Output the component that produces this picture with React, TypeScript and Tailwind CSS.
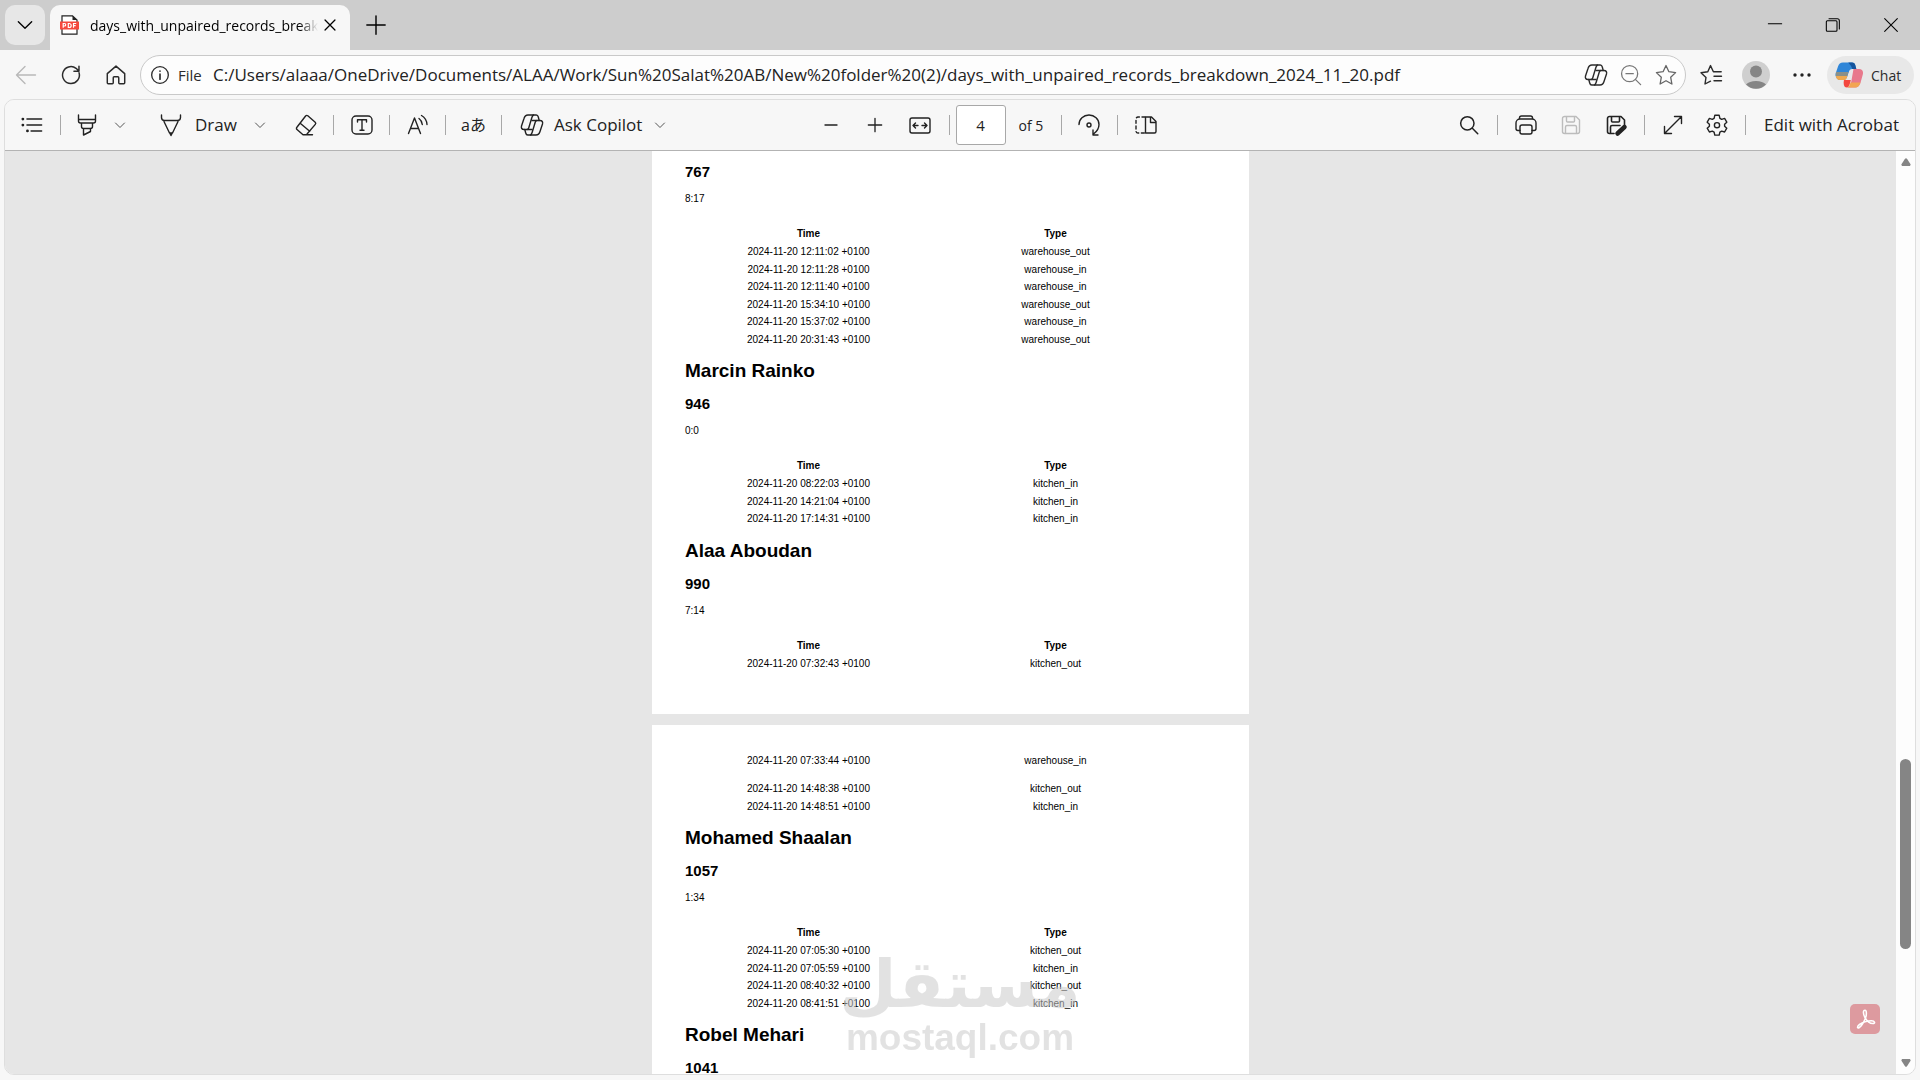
import type { ReactNode } from "react";

type Row = { time: string; type: string };

type Person = {
  name?: string;
  id: string;
  hours?: string;
  rows?: Row[];
};

const firstPage: Person[] = [
  {
    id: "767",
    hours: "8:17",
    rows: [
      { time: "2024-11-20 12:11:02 +0100", type: "warehouse_out" },
      { time: "2024-11-20 12:11:28 +0100", type: "warehouse_in" },
      { time: "2024-11-20 12:11:40 +0100", type: "warehouse_in" },
      { time: "2024-11-20 15:34:10 +0100", type: "warehouse_out" },
      { time: "2024-11-20 15:37:02 +0100", type: "warehouse_in" },
      { time: "2024-11-20 20:31:43 +0100", type: "warehouse_out" },
    ],
  },
  {
    name: "Marcin Rainko",
    id: "946",
    hours: "0:0",
    rows: [
      { time: "2024-11-20 08:22:03 +0100", type: "kitchen_in" },
      { time: "2024-11-20 14:21:04 +0100", type: "kitchen_in" },
      { time: "2024-11-20 17:14:31 +0100", type: "kitchen_in" },
    ],
  },
  {
    name: "Alaa Aboudan",
    id: "990",
    hours: "7:14",
    rows: [{ time: "2024-11-20 07:32:43 +0100", type: "kitchen_out" }],
  },
];

const carriedRows: Row[] = [
  { time: "2024-11-20 14:48:38 +0100", type: "kitchen_out" },
  { time: "2024-11-20 14:48:51 +0100", type: "kitchen_in" },
];

const secondPage: Person[] = [
  {
    name: "Mohamed Shaalan",
    id: "1057",
    hours: "1:34",
    rows: [
      { time: "2024-11-20 07:05:30 +0100", type: "kitchen_out" },
      { time: "2024-11-20 07:05:59 +0100", type: "kitchen_in" },
      { time: "2024-11-20 08:40:32 +0100", type: "kitchen_out" },
      { time: "2024-11-20 08:41:51 +0100", type: "kitchen_in" },
    ],
  },
  { name: "Robel Mehari", id: "1041" },
];

const Icon = ({
  children,
  className = "size-6",
  stroke = 1.4,
}: {
  children: ReactNode;
  className?: string;
  stroke?: number;
}) => (
  <svg
    viewBox="0 0 24 24"
    className={`shrink-0 ${className}`}
    fill="none"
    stroke="currentColor"
    strokeWidth={stroke}
    strokeLinecap="round"
    strokeLinejoin="round"
    aria-hidden="true"
  >
    {children}
  </svg>
);

const IconButton = ({
  label,
  className = "w-[44px]",
  children,
}: {
  label: string;
  className?: string;
  children: ReactNode;
}) => (
  <button
    type="button"
    aria-label={label}
    className={`flex h-10 shrink-0 items-center justify-center ${className}`}
  >
    {children}
  </button>
);

const Divider = () => (
  <div className="mx-[6px] h-5 w-px shrink-0 bg-[#a8a8a8]"></div>
);

const Chevron = () => (
  <Icon className="size-3 text-[#555]" stroke={2}>
    <path d="M3 8l9 9 9-9" />
  </Icon>
);

const CopilotOutline = () => (
  <Icon stroke={1.4}>
    <path d="M12 16.500H4C1.800 16.500 1 15 1.500 13L4 5.500C4.700 3 6 2 8 2h8.300c1.200 0 1.700.8 2 2l.9 3.500" />
    <path d="M12 7.500h8c2.200 0 3 1.500 2.500 3.500L20 18.500c-.7 2.500-2 3.500-4 3.500H7.700c-1.200 0-1.700-.8-2-2l-.9-3.500" />
    <path d="M13.500 2c-1 .5-1.300 1.500-1.700 2.800L8.700 15c-.3 1-.8 1.500-1.700 1.500M10.500 22c1-.5 1.300-1.500 1.700-2.800L15.300 9c.3-1 .8-1.500 1.700-1.500" />
  </Icon>
);

const TabStrip = () => (
  <header className="flex h-[50px] shrink-0 items-start bg-[#cdcdcd] pl-[5px] pt-[5px]">
    <button
      type="button"
      aria-label="Search tabs"
      className="flex size-10 items-center justify-center rounded-[10px] bg-[#e7e7e7]"
    >
      <Icon className="size-4" stroke={2}>
        <path d="M2 7l10 10L22 7" />
      </Icon>
    </button>
    <div className="ml-[5px] flex h-[45px] w-[300px] items-center rounded-t-[10px] bg-[#f7f7f7] pb-[5px] pl-[10px] pr-2">
      <svg viewBox="0 0 20 20" className="size-5 shrink-0" aria-hidden="true">
        <path d="M2 .8h10.500L17 5v14.200H2z" fill="#fff" stroke="#222" strokeWidth="1.200" />
        <path d="M12.500.8V5H17z" fill="#222" />
        <path d="M0 6.500h19v8H0z" fill="#f5473c" />
        <path
          d="M3.200 12.800V8.500h1.300a1.200 1.200 0 0 1 0 2.500H3.200M8.300 8.500v4h.9a2 2 0 0 0 0-4zM13.500 12.800V8.500h2.700M13.500 10.700h2.200"
          fill="none"
          stroke="#fff"
          strokeWidth="1.200"
        />
      </svg>
      <span className="ml-[10px] w-[229px] overflow-hidden whitespace-nowrap text-[14px] text-black [mask-image:linear-gradient(to_right,#000_92%,transparent)]">
        days_with_unpaired_records_breakdown
      </span>
      <IconButton label="Close tab" className="w-6">
        <Icon className="size-[14px]" stroke={2.2}>
          <path d="M3.500 3.500l17 17M20.500 3.500l-17 17" />
        </Icon>
      </IconButton>
    </div>
    <IconButton label="New tab" className="ml-1 w-[44px]">
      <Icon className="size-5" stroke={1.7}>
        <path d="M12 1v22M1 12h22" />
      </Icon>
    </IconButton>
    <div className="ml-auto flex">
      <IconButton label="Minimize" className="w-[58px]">
        <Icon className="size-4" stroke={1.6}>
          <path d="M2 10h20" />
        </Icon>
      </IconButton>
      <IconButton label="Restore" className="w-[58px]">
        <Icon className="size-4" stroke={1.6}>
          <rect x="2" y="5.500" width="16" height="16" rx="1.500" />
          <path d="M6 2.500h12.500a3 3 0 0 1 3 3V18" />
        </Icon>
      </IconButton>
      <IconButton label="Close" className="w-[58px]">
        <Icon className="size-4" stroke={1.6}>
          <path d="M2.500 2.500l19 19M21.500 2.500l-19 19" />
        </Icon>
      </IconButton>
    </div>
  </header>
);

const AddressRow = () => (
  <div className="flex h-[49px] shrink-0 items-center pl-[3px] pr-[6px] pt-px text-[#2b2b2b]">
    <IconButton label="Back" className="w-[45px] text-[#b9b9b9]">
      <Icon>
        <path d="M21.500 12H2.500M11 3.500L2.500 12l8.500 8.500" />
      </Icon>
    </IconButton>
    <IconButton label="Refresh" className="w-[45px]">
      <Icon className="size-[22px]" stroke={1.6}>
        <path d="M20.800 9.500A9.200 9.200 0 1 1 17.500 4.700l3 2.800M20.700 2.500v5.300h-5.500" />
      </Icon>
    </IconButton>
    <IconButton label="Home" className="w-[45px]">
      <Icon className="size-[22px]" stroke={1.6}>
        <path d="M2.500 10.500L12 2.300l9.500 8.200v10a1 1 0 0 1-1 1h-4.500a1 1 0 0 1-1-1V15a1 1 0 0 0-1-1h-4a1 1 0 0 0-1 1v5.500a1 1 0 0 1-1 1H3.500a1 1 0 0 1-1-1z" />
      </Icon>
    </IconButton>
    <div className="ml-[2px] flex h-10 min-w-0 flex-1 items-center rounded-full border border-[#c9c9c9] bg-[#fdfdfd] pl-[9px]">
      <Icon className="size-5" stroke={1.6}>
        <circle cx="12" cy="12" r="10" />
        <path d="M12 11v6M12 7.300v.2" strokeWidth="2" />
      </Icon>
      <label htmlFor="url" className="ml-2 w-[35px] shrink-0 text-[15px]">
        File
      </label>
      <input
        id="url"
        className="min-w-0 flex-1 bg-transparent text-[17px] text-[#222] outline-none"
        defaultValue="C:/Users/alaaa/OneDrive/Documents/ALAA/Work/Sun%20Salat%20AB/New%20folder%20(2)/days_with_unpaired_records_breakdown_2024_11_20.pdf"
      />
      <IconButton label="Copilot" className="w-[34px]">
        <CopilotOutline />
      </IconButton>
      <IconButton label="Zoom out" className="w-[35px] text-[#777]">
        <Icon className="size-[22px]" stroke={1.4}>
          <circle cx="10.500" cy="10.500" r="8.800" />
          <path d="M17 17l5.500 5.500M6.500 10.500h8" />
        </Icon>
      </IconButton>
      <IconButton label="Add to favorites" className="mr-[1px] w-[36px] text-[#666]">
        <Icon stroke={1.3}>
          <path d="M12 2.500l2.900 6.200 6.700.9-4.900 4.700 1.200 6.700-5.900-3.300L6.100 21l1.200-6.700-4.900-4.700 6.700-.9z" />
        </Icon>
      </IconButton>
    </div>
    <IconButton label="Favorites" className="w-[50px]">
      <Icon stroke={1.4}>
        <path d="M11.500 18.200L6 21l1-6.600L2 9.700l6.800-1L11.500 2.600l2.900 6.100h7.800M15 13.200h7.500M15 17.800h7.500" />
      </Icon>
    </IconButton>
    <IconButton label="Profile" className="w-10">
      <svg viewBox="0 0 28 28" className="size-7" aria-hidden="true">
        <circle cx="14" cy="14" r="14" fill="#cfcfcf" />
        <circle cx="14" cy="10.500" r="6" fill="#858585" />
        <path d="M4 23.500a11.500 7 0 0 1 20 0 14 14 0 0 1-20 0z" fill="#858585" />
      </svg>
    </IconButton>
    <IconButton label="Settings and more" className="w-[51px]">
      <svg viewBox="0 0 18 4" className="h-1 w-[18px]" fill="#222" aria-hidden="true">
        <circle cx="2" cy="2" r="1.700" />
        <circle cx="9" cy="2" r="1.700" />
        <circle cx="16" cy="2" r="1.700" />
      </svg>
    </IconButton>
    <button
      type="button"
      className="flex h-[38px] w-[87px] shrink-0 items-center rounded-full bg-[#e8e8e8] pl-2 text-[14px]"
    >
      <svg viewBox="0 0 28 28" className="size-7" aria-hidden="true">
        <path d="M8 1.500h9c2 0 2.800 1 3.300 2.800l1 3.700h-4c-2 0-2.900 1-3.500 3L12 16H2c-1.700 0-1.700-2-1.200-4L3 5.500C3.900 2.800 5.300 1.500 8 1.500z" fill="#2f86d8" />
        <path d="M17 1.500c2 0 2.800 1 3.300 2.800l1 3.700h-4c-1-3-2-4-4-6.500z" fill="#16549c" />
        <path d="M1 11h12.500L12 16c-.6 2-1.500 3-3.500 3H5C2.500 19 0 17 1 11z" fill="#8a9089" />
        <path d="M1 15h11.300c-.7 2.500-1.300 4-3.300 4H5c-2.300 0-3.800-1.500-4-4z" fill="#f0a94f" />
        <path d="M18.500 8H24c3.500 0 4.500 2.500 3.800 5.500L26 20c-1 4-2.500 6.500-6 6.500h-8c3-.5 3.500-3 4.300-6z" fill="#e8798c" />
        <path d="M15.500 21.500h10c-1 3-2.500 5-5.500 5h-8c2-.5 3-2.500 3.500-5z" fill="#f2a552" />
        <path d="M9 19h6.800c-.8 4-2 7.500-4.300 7.500S8 23 9 19z" fill="#f3473e" />
      </svg>
      <span className="ml-2">Chat</span>
    </button>
  </div>
);

const PdfToolbar = () => (
  <div className="flex h-[51px] shrink-0 items-center border-b border-[#b3b3b3] bg-[#f7f7f7] text-[17px] whitespace-nowrap text-[#222]">
    <div className="flex min-w-0 flex-1 items-center pl-[5px]">
      <IconButton label="Contents">
        <Icon className="size-[22px]" stroke={1.6}>
          <path d="M6.500 5.500h16M6.500 12h16M11 18.500h11.500" />
          <path d="M2 5.500h.1M2 12h.1M7 18.500h.1" strokeWidth="3" />
        </Icon>
      </IconButton>
      <Divider />
      <IconButton label="Highlight" className="w-10">
        <Icon>
          <path d="M3.500 2v6a2 2 0 0 0 2 2h13a2 2 0 0 0 2-2V2M3.500 6.500h17M6.500 10v3.500a2 2 0 0 0 2 2h7a2 2 0 0 0 2-2V10M8.500 15.500v6.500l7-3.500v-3" />
        </Icon>
      </IconButton>
      <IconButton label="Highlight options" className="w-[26px]">
        <Chevron />
      </IconButton>
      <button type="button" className="ml-[26px] flex h-10 w-[77px] shrink-0 items-center">
        <Icon>
          <path d="M2.500 2v2.500a3 3 0 0 0 3 3h13a3 3 0 0 0 3-3V2M4.500 7.500l6 12.500h3l6-12.500M10.500 19.500L12 22.500l1.500-3" />
        </Icon>
        <span className="ml-3">Draw</span>
      </button>
      <IconButton label="Draw options" className="w-[48px]">
        <Chevron />
      </IconButton>
      <IconButton label="Erase" className="w-[43px]">
        <Icon>
          <path d="M13.800 2.800l7.400 6.400a1.600 1.600 0 0 1 .1 2.200l-8.500 9.800a1.600 1.600 0 0 1-1.200.5H9L3 16.500a1.600 1.600 0 0 1-.1-2.300L11.600 3a1.600 1.600 0 0 1 2.200-.2zM6.200 10.200l9.500 8M9 21.700h9.500" />
        </Icon>
      </IconButton>
      <Divider />
      <IconButton label="Add text" className="w-[43px]">
        <Icon>
          <rect x="2" y="3" width="20" height="18" rx="4" />
          <path d="M7.500 9V6.800h9V9M12 6.800v10.500M10 17.300h4" />
        </Icon>
      </IconButton>
      <Divider />
      <IconButton label="Read aloud" className="w-[43px]">
        <Icon>
          <path d="M2.500 20.500L8.500 5l6 15.500M4.700 15.500h7.800M13 5.500c2 1.500 3 3.500 3.300 6M15.500 2.500c3.500 2 5.200 5 5.500 9" />
        </Icon>
      </IconButton>
      <Divider />
      <IconButton label="Translate" className="w-[43px]">
        <span className="font-['Open_Sans','Noto_Sans_CJK_JP',sans-serif] text-[16px] leading-5">
          aあ
        </span>
      </IconButton>
      <Divider />
      <button type="button" className="flex h-10 w-[140px] shrink-0 items-center pl-3">
        <CopilotOutline />
        <span className="ml-[10px]">Ask Copilot</span>
      </button>
      <IconButton label="Copilot options" className="w-6">
        <Chevron />
      </IconButton>
    </div>
    <div className="flex w-[410px] shrink-0 items-center justify-end">
      <IconButton label="Zoom out">
        <Icon className="size-4" stroke={2}>
          <path d="M3 12h18" />
        </Icon>
      </IconButton>
      <IconButton label="Zoom in">
        <Icon className="size-4" stroke={2}>
          <path d="M12 2v20M2 12h20" />
        </Icon>
      </IconButton>
      <IconButton label="Fit to width" className="w-[46px]">
        <Icon>
          <rect x="2" y="5" width="20" height="15" rx="2" />
          <path d="M5 12.500h5M14 12.500h5M7.500 10L5 12.500 7.500 15M16.500 10l2.500 2.500-2.500 2.500" />
        </Icon>
      </IconButton>
      <Divider />
      <input
        aria-label="Page number"
        defaultValue="4"
        className="h-10 w-[50px] rounded-[3px] border border-[#a8a8a8] bg-white text-center text-[15px]"
      />
      <span className="ml-[13px] w-9 text-[14px]">of 5</span>
      <Divider />
      <IconButton label="Rotate" className="w-[43px]">
        <Icon>
          <path d="M2 11.500C2 6 6.500 2 12 2s10 4 10 9.500c0 4-2 7-5.500 9.500M16 17v5h5" />
          <circle cx="12" cy="12" r="2" />
        </Icon>
      </IconButton>
      <Divider />
      <IconButton label="Page view">
        <Icon>
          <path d="M11.500 4h6l4.500 4.500V18.500a1.500 1.500 0 0 1-1.500 1.500h-9zM16.500 4v5.500H22" />
          <path d="M11 4H4a2 2 0 0 0-2 2v12a2 2 0 0 0 2 2h7" strokeDasharray="3 2.600" />
        </Icon>
      </IconButton>
    </div>
    <div className="flex min-w-0 flex-1 items-center justify-end">
      <IconButton label="Find">
        <Icon className="size-5" stroke={1.8}>
          <circle cx="10" cy="10" r="8" />
          <path d="M16 16l6.500 6.500" />
        </Icon>
      </IconButton>
      <Divider />
      <IconButton label="Print">
        <Icon>
          <path d="M6 17.500H4a2 2 0 0 1-2-2V10a4 4 0 0 1 4-4h12a4 4 0 0 1 4 4v5.500a2 2 0 0 1-2 2h-2M5.500 6V5a2 2 0 0 1 2-2h9a2 2 0 0 1 2 2v1" />
          <rect x="6" y="12" width="12" height="9" rx="2" />
        </Icon>
      </IconButton>
      <IconButton label="Save" className="w-[46px] text-[#bcbcbc]">
        <Icon>
          <path d="M3.500 5.500a2 2 0 0 1 2-2H17L20.500 7v11.500a2 2 0 0 1-2 2h-13a2 2 0 0 1-2-2zM7.500 3.500V8a1 1 0 0 0 1 1h6a1 1 0 0 0 1-1V3.500M6.500 20.500V14a1.500 1.500 0 0 1 1.500-1.500h8a1.500 1.500 0 0 1 1.500 1.500v6.500" />
        </Icon>
      </IconButton>
      <IconButton label="Save as">
        <Icon stroke={1.6}>
          <path d="M10 20.500H5.500a2 2 0 0 1-2-2v-13a2 2 0 0 1 2-2H17L20.500 7v4.500M7.500 3.500V8a1 1 0 0 0 1 1h6a1 1 0 0 0 1-1V3.500M6.500 20.500V14a1.500 1.500 0 0 1 1.500-1.500h8" />
          <path d="M13.500 20.500L20.500 14" strokeWidth="4.500" />
        </Icon>
      </IconButton>
      <Divider />
      <IconButton label="Full screen">
        <Icon>
          <path d="M3.500 20.500l17-17M13.500 3.500h7v7M3.500 13.500v7h7" />
        </Icon>
      </IconButton>
      <IconButton label="Settings">
        <Icon>
          <path d="M9.800 2.300h4.400l.7 3 1.800 1 2.900-.9 2.200 3.800-2.200 2v2l2.200 2-2.200 3.800-2.900-.9-1.800 1-.7 3H9.800l-.7-3-1.800-1-2.900.9-2.200-3.800 2.200-2v-2l-2.200-2 2.200-3.800 2.900.9 1.800-1z" />
          <circle cx="12" cy="12.200" r="2.600" />
        </Icon>
      </IconButton>
      <Divider />
      <button type="button" className="h-10 w-[163px] shrink-0 pr-1">
        Edit with Acrobat
      </button>
    </div>
  </div>
);

const RecordRows = ({ rows }: { rows: Row[] }) => (
  <tbody>
    {rows.map((row) => (
      <tr key={row.time} className="odd:h-[18px] even:h-[17px]">
        <td className="p-0">{row.time}</td>
        <td className="p-0">{row.type}</td>
      </tr>
    ))}
  </tbody>
);

const tableClass =
  "w-[494px] table-fixed border-collapse text-center text-[10px] leading-3";

const PersonBlock = ({ person }: { person: Person }) => (
  <section className="flow-root">
    {person.name && (
      <h2 className="mt-[11px] text-[19px] leading-6 font-bold">{person.name}</h2>
    )}
    <h3 className="mt-3 text-[15px] leading-[18px] font-bold">{person.id}</h3>
    {person.hours && (
      <p className="mt-3 text-[10px] leading-3">{person.hours}</p>
    )}
    {person.rows && (
      <table className={`mt-5 ${tableClass}`}>
        <thead>
          <tr className="h-[18px]">
            <th className="p-0">Time</th>
            <th className="p-0">Type</th>
          </tr>
        </thead>
        <RecordRows rows={person.rows} />
      </table>
    )}
  </section>
);

const Watermark = () => (
  <div className="absolute bottom-4 left-1/2 flex w-[234px] -translate-x-1/2 flex-col items-center text-[#cccccc] opacity-55">
    <span
      lang="ar"
      dir="rtl"
      className="font-['DejaVu_Sans',sans-serif] text-[66px] leading-[66px] font-bold"
    >
      مستقل
    </span>
    <span className="font-['Liberation_Sans',Arial,sans-serif] text-[37px] leading-10 font-bold">
      mostaql.com
    </span>
  </div>
);

const Scrollbar = () => (
  <div className="flex w-[19px] shrink-0 flex-col items-center bg-[#fdfdfd] py-[7px] text-[#858585]">
    <button type="button" aria-label="Scroll up">
      <svg viewBox="0 0 10 8" className="h-2 w-[10px]" fill="currentColor" aria-hidden="true">
        <path d="M4 .8a1.300 1.300 0 0 1 2 0L9.700 6.500 9 8H1L.3 6.500z" />
      </svg>
    </button>
    <div className="flex-[588]"></div>
    <div className="w-[11px] flex-[189] rounded-full bg-[#858585]"></div>
    <div className="flex-[109]"></div>
    <button type="button" aria-label="Scroll down">
      <svg viewBox="0 0 10 8" className="h-2 w-[10px]" fill="currentColor" aria-hidden="true">
        <path d="M4 7.200a1.300 1.300 0 0 0 2 0L9.700 1.500 9 0H1L.3 1.500z" />
      </svg>
    </button>
  </div>
);

const App = () => {
  return (
    <div className="flex h-screen flex-col overflow-hidden bg-[#f7f7f7] font-['Open_Sans','Noto_Sans',sans-serif]">
      <TabStrip />
      <AddressRow />
      <div className="mx-1 mb-[5px] flex min-h-0 flex-1 flex-col overflow-hidden rounded-[10px] border border-[#dedede]">
        <PdfToolbar />
        <div className="relative flex min-h-0 flex-1">
          <main className="flex min-w-0 flex-1 flex-col items-center overflow-hidden bg-[#e6e6e6] font-['Liberation_Sans',Arial,sans-serif] text-black">
            <article className="w-[597px] shrink-0 bg-white px-[33px] pb-[41px]">
              {firstPage.map((person) => (
                <PersonBlock key={person.id} person={person} />
              ))}
            </article>
            <article className="mt-[11px] w-[597px] shrink-0 bg-white px-[33px] pt-7 pb-10">
              <table className={tableClass}>
                <thead>
                  <tr className="h-[27px] align-top">
                    <td className="p-0 pt-[2px]">2024-11-20 07:33:44 +0100</td>
                    <td className="p-0 pt-[2px]">warehouse_in</td>
                  </tr>
                </thead>
                <RecordRows rows={carriedRows} />
              </table>
              {secondPage.map((person) => (
                <PersonBlock key={person.id} person={person} />
              ))}
            </article>
          </main>
          <Scrollbar />
          <Watermark />
          <button
            type="button"
            aria-label="Open in Acrobat"
            className="absolute right-[35px] bottom-10 flex size-[30px] items-center justify-center rounded-[5px] bg-[#dd9a9f] text-white"
          >
            <Icon className="size-[22px]" stroke={1.7}>
              <path d="M12 2.500c-2.500 0-2 4.500 0 8s5.500 6.500 8.500 6.500 2.500-3-1.500-3c-5 0-9.500 1.500-13 4-3 2.200-2.500 4.500-.5 3.500 3-1.500 8-10 8-15.500 0-2.500-.5-3.500-1.500-3.500z" />
            </Icon>
          </button>
        </div>
      </div>
    </div>
  );
};

export default App;
